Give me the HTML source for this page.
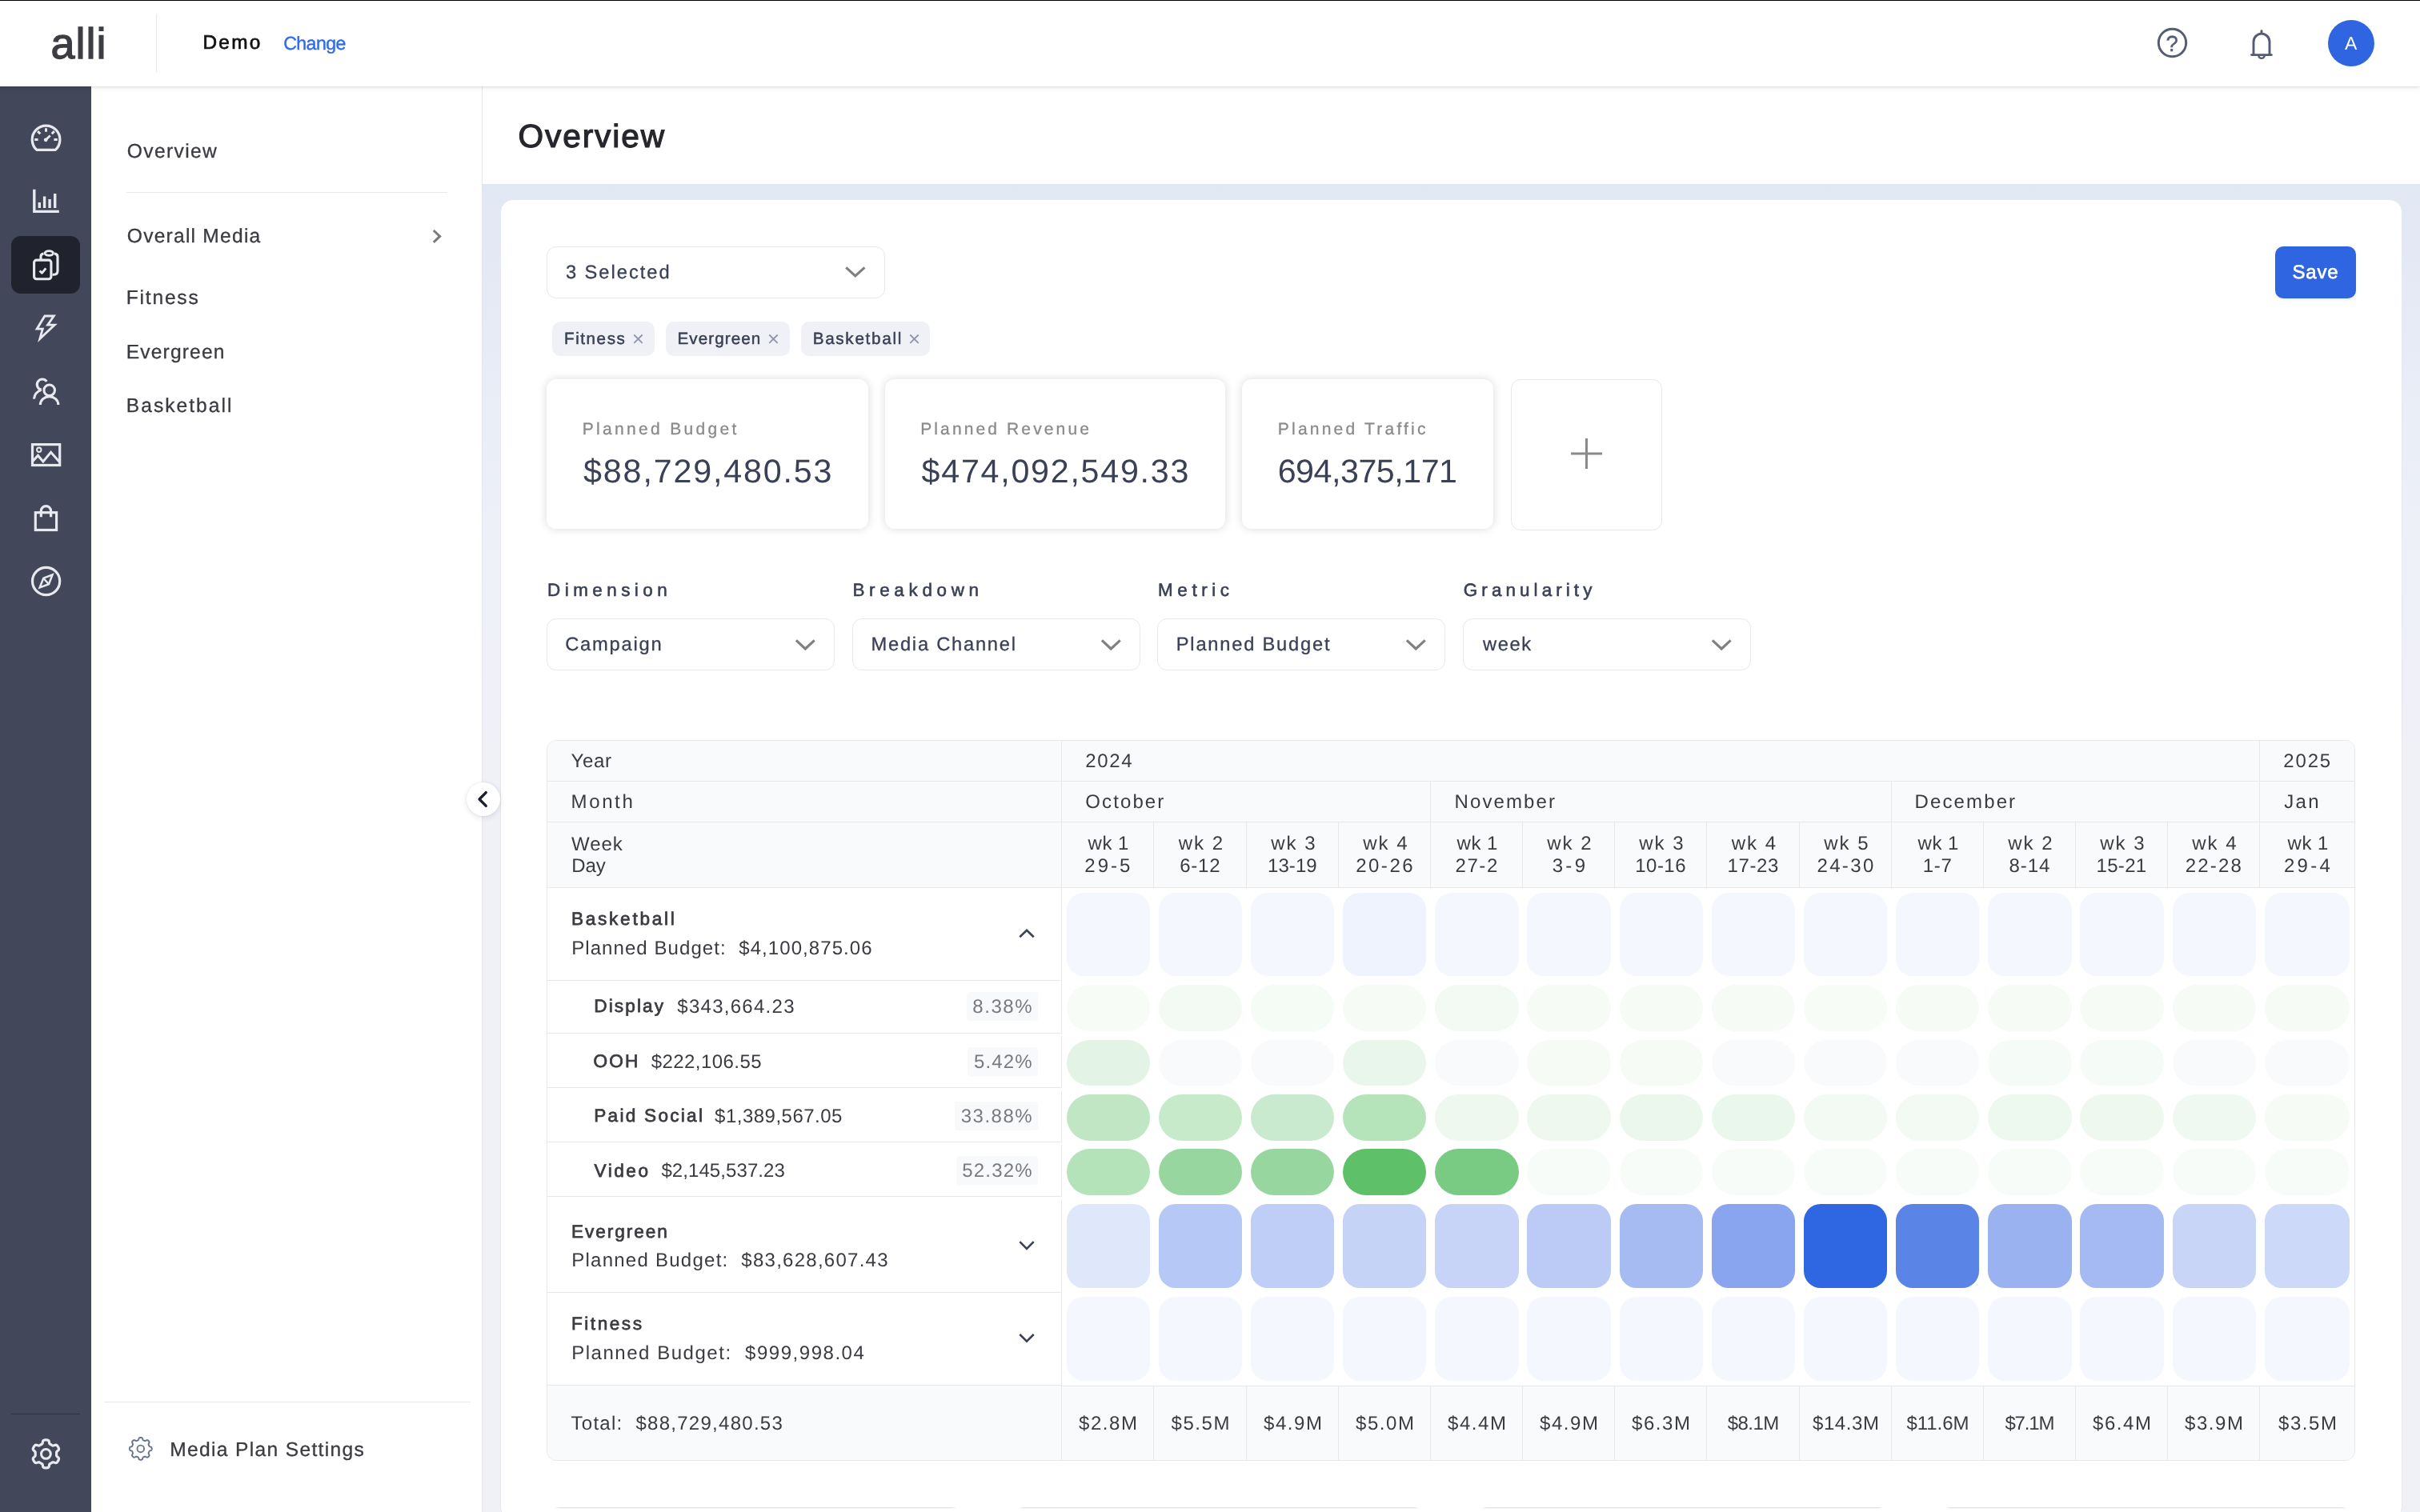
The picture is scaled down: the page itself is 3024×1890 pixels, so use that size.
<!DOCTYPE html>
<html lang="en"><head><meta charset="utf-8"><title>Overview - alli</title>
<style>
html,body{margin:0;padding:0;background:#fff;}
@media (max-width:1600px){html{zoom:0.5;}}
body{width:3024px;height:1890px;overflow:hidden;position:relative;font-family:"Liberation Sans", sans-serif;}
.b{position:absolute;box-sizing:border-box;}
.t{position:absolute;white-space:pre;font-weight:400;text-rendering:geometricPrecision;}
svg.ov{position:absolute;left:0;top:0;width:3024px;height:1890px;}
.tx{position:absolute;left:0;top:0;width:3024px;height:1890px;will-change:transform;}
</style></head><body>
<div class="b" style="left:602.00px;top:230.00px;width:2422.00px;height:1660.00px;background:linear-gradient(180deg,#e1e7f3 0px,#e5eaf5 150px,#eaeef7 300px,#eef0f8 450px,#f0f1f7 700px,#f0f1f7 1660px);"></div>
<div class="b" style="left:624.70px;top:248.70px;width:2376.90px;height:1651.30px;background:#fff;border:1px solid #e6e8ee;border-radius:16px;"></div>
<div class="b" style="left:114.00px;top:108.00px;width:488.50px;height:1782.00px;background:#fff;border-right:1px solid #e7e7eb;"></div>
<div class="b" style="left:603.00px;top:108.00px;width:2421.00px;height:122.00px;background:#fff;"></div>
<div class="b" style="left:0.00px;top:108.00px;width:114.00px;height:1782.00px;background:#42475a;"></div>
<div class="b" style="left:14.00px;top:295.00px;width:86.00px;height:72.00px;background:#20222e;border-radius:12px;"></div>
<div class="b" style="left:14.00px;top:1766.80px;width:86.00px;height:1.40px;background:#2f3242;"></div>
<div class="b" style="left:0.00px;top:0.00px;width:3024.00px;height:108.00px;background:#fff;box-shadow:0 1px 3px rgba(0,0,0,0.10),0 3px 8px rgba(0,0,0,0.05);"></div>
<div class="b" style="left:0.00px;top:0.00px;width:3024.00px;height:1.00px;background:#000;"></div>
<div class="b" style="left:195.00px;top:18.00px;width:1.00px;height:72.00px;background:#e6e7eb;"></div>
<div class="b" style="left:2909.00px;top:25.00px;width:58.00px;height:58.00px;background:#2f65e0;border-radius:50%;"></div>
<div class="b" style="left:158.00px;top:239.50px;width:401.00px;height:1.00px;background:#e9e9ed;"></div>
<div class="b" style="left:130.00px;top:1751.90px;width:458.00px;height:1.00px;background:#e9e9ed;"></div>
<div class="b" style="left:582.50px;top:978.00px;width:42.00px;height:42.00px;background:#fff;border-radius:50%;box-shadow:0 2px 7px rgba(30,35,60,0.12),0 0 2px rgba(30,35,60,0.08);"></div>
<div class="b" style="left:683.00px;top:308.00px;width:423.00px;height:65.00px;background:#fff;border:1px solid #e8e8ea;border-radius:12px;"></div>
<div class="b" style="left:2843.00px;top:308.00px;width:101.00px;height:65.00px;background:#2f65e0;border-radius:10px;box-shadow:0 2px 4px rgba(0,0,0,0.06);"></div>
<div class="b" style="left:689.80px;top:402.00px;width:128.00px;height:42.70px;background:#f0f1f7;border-radius:10px;"></div>
<div class="b" style="left:832.00px;top:402.00px;width:155.00px;height:42.70px;background:#f0f1f7;border-radius:10px;"></div>
<div class="b" style="left:1001.00px;top:402.00px;width:160.80px;height:42.70px;background:#f0f1f7;border-radius:10px;"></div>
<div class="b" style="left:683.00px;top:474.00px;width:402.00px;height:187.00px;background:#fff;border-radius:12px;box-shadow:0 0 12px rgba(0,0,0,0.15);"></div>
<div class="b" style="left:1106.00px;top:474.00px;width:425.30px;height:187.00px;background:#fff;border-radius:12px;box-shadow:0 0 12px rgba(0,0,0,0.15);"></div>
<div class="b" style="left:1551.50px;top:474.00px;width:314.80px;height:187.00px;background:#fff;border-radius:12px;box-shadow:0 0 12px rgba(0,0,0,0.15);"></div>
<div class="b" style="left:1888.00px;top:474.00px;width:189.00px;height:189.00px;background:#fff;border:1px solid #e8e8ea;border-radius:12px;"></div>
<div class="b" style="left:683.00px;top:773.00px;width:360.00px;height:65.00px;background:#fff;border:1px solid #e8e8ea;border-radius:12px;"></div>
<div class="b" style="left:1065.00px;top:773.00px;width:360.00px;height:65.00px;background:#fff;border:1px solid #e8e8ea;border-radius:12px;"></div>
<div class="b" style="left:1446.00px;top:773.00px;width:360.00px;height:65.00px;background:#fff;border:1px solid #e8e8ea;border-radius:12px;"></div>
<div class="b" style="left:1828.00px;top:773.00px;width:360.00px;height:65.00px;background:#fff;border:1px solid #e8e8ea;border-radius:12px;"></div>
<div class="b" style="left:683.00px;top:925.00px;width:2260.00px;height:901.00px;background:#fff;border:1px solid #e8e8ea;border-radius:12px;overflow:hidden;"></div>
<div class="b" style="left:684.00px;top:926.00px;width:2258.00px;height:183.00px;background:#f9fafc;border-radius:11px 11px 0 0;"></div>
<div class="b" style="left:684.00px;top:1733.00px;width:2258.00px;height:92.00px;background:#f9fafc;border-radius:0 0 11px 11px;"></div>
<div class="b" style="left:684.00px;top:1732.00px;width:642.00px;height:2.00px;background:#f9fafc;"></div>
<div class="b" style="left:684.00px;top:976.00px;width:2258.00px;height:1.00px;background:#e8e8ea;"></div>
<div class="b" style="left:684.00px;top:1027.00px;width:2258.00px;height:1.00px;background:#e8e8ea;"></div>
<div class="b" style="left:684.00px;top:1109.00px;width:2258.00px;height:1.00px;background:#e8e8ea;"></div>
<div class="b" style="left:684.00px;top:1225.00px;width:643.00px;height:1.00px;background:#e8e8ea;"></div>
<div class="b" style="left:684.00px;top:1291.00px;width:643.00px;height:1.00px;background:#e8e8ea;"></div>
<div class="b" style="left:684.00px;top:1359.00px;width:643.00px;height:1.00px;background:#e8e8ea;"></div>
<div class="b" style="left:684.00px;top:1427.00px;width:643.00px;height:1.00px;background:#e8e8ea;"></div>
<div class="b" style="left:684.00px;top:1495.00px;width:643.00px;height:1.00px;background:#e8e8ea;"></div>
<div class="b" style="left:684.00px;top:1615.00px;width:643.00px;height:1.00px;background:#e8e8ea;"></div>
<div class="b" style="left:684.00px;top:1731.00px;width:642.00px;height:1.00px;background:#e8e8ea;"></div>
<div class="b" style="left:1327.00px;top:1732.00px;width:1615.00px;height:1.00px;background:#e8e8ea;"></div>
<div class="b" style="left:1326.00px;top:926.00px;width:1.00px;height:899.00px;background:#e8e8ea;"></div>
<div class="b" style="left:1326.00px;top:1292.00px;width:1.00px;height:3.00px;background:#fff;"></div>
<div class="b" style="left:1326.00px;top:1360.00px;width:1.00px;height:3.00px;background:#fff;"></div>
<div class="b" style="left:1326.00px;top:1428.00px;width:1.00px;height:3.00px;background:#fff;"></div>
<div class="b" style="left:1326.00px;top:1496.00px;width:1.00px;height:3.00px;background:#fff;"></div>
<div class="b" style="left:1441.00px;top:1028.00px;width:1.00px;height:81.00px;background:#e8e8ea;"></div>
<div class="b" style="left:1441.00px;top:1733.00px;width:1.00px;height:92.00px;background:#e8e8ea;"></div>
<div class="b" style="left:1557.00px;top:1028.00px;width:1.00px;height:81.00px;background:#e8e8ea;"></div>
<div class="b" style="left:1557.00px;top:1733.00px;width:1.00px;height:92.00px;background:#e8e8ea;"></div>
<div class="b" style="left:1672.00px;top:1028.00px;width:1.00px;height:81.00px;background:#e8e8ea;"></div>
<div class="b" style="left:1672.00px;top:1733.00px;width:1.00px;height:92.00px;background:#e8e8ea;"></div>
<div class="b" style="left:1787.00px;top:1028.00px;width:1.00px;height:81.00px;background:#e8e8ea;"></div>
<div class="b" style="left:1787.00px;top:1733.00px;width:1.00px;height:92.00px;background:#e8e8ea;"></div>
<div class="b" style="left:1902.00px;top:1028.00px;width:1.00px;height:81.00px;background:#e8e8ea;"></div>
<div class="b" style="left:1902.00px;top:1733.00px;width:1.00px;height:92.00px;background:#e8e8ea;"></div>
<div class="b" style="left:2017.00px;top:1028.00px;width:1.00px;height:81.00px;background:#e8e8ea;"></div>
<div class="b" style="left:2017.00px;top:1733.00px;width:1.00px;height:92.00px;background:#e8e8ea;"></div>
<div class="b" style="left:2132.00px;top:1028.00px;width:1.00px;height:81.00px;background:#e8e8ea;"></div>
<div class="b" style="left:2132.00px;top:1733.00px;width:1.00px;height:92.00px;background:#e8e8ea;"></div>
<div class="b" style="left:2248.00px;top:1028.00px;width:1.00px;height:81.00px;background:#e8e8ea;"></div>
<div class="b" style="left:2248.00px;top:1733.00px;width:1.00px;height:92.00px;background:#e8e8ea;"></div>
<div class="b" style="left:2363.00px;top:1028.00px;width:1.00px;height:81.00px;background:#e8e8ea;"></div>
<div class="b" style="left:2363.00px;top:1733.00px;width:1.00px;height:92.00px;background:#e8e8ea;"></div>
<div class="b" style="left:2478.00px;top:1028.00px;width:1.00px;height:81.00px;background:#e8e8ea;"></div>
<div class="b" style="left:2478.00px;top:1733.00px;width:1.00px;height:92.00px;background:#e8e8ea;"></div>
<div class="b" style="left:2593.00px;top:1028.00px;width:1.00px;height:81.00px;background:#e8e8ea;"></div>
<div class="b" style="left:2593.00px;top:1733.00px;width:1.00px;height:92.00px;background:#e8e8ea;"></div>
<div class="b" style="left:2708.00px;top:1028.00px;width:1.00px;height:81.00px;background:#e8e8ea;"></div>
<div class="b" style="left:2708.00px;top:1733.00px;width:1.00px;height:92.00px;background:#e8e8ea;"></div>
<div class="b" style="left:2823.00px;top:1028.00px;width:1.00px;height:81.00px;background:#e8e8ea;"></div>
<div class="b" style="left:2823.00px;top:1733.00px;width:1.00px;height:92.00px;background:#e8e8ea;"></div>
<div class="b" style="left:1787.00px;top:977.00px;width:1.00px;height:50.00px;background:#e8e8ea;"></div>
<div class="b" style="left:2363.00px;top:977.00px;width:1.00px;height:50.00px;background:#e8e8ea;"></div>
<div class="b" style="left:2823.00px;top:977.00px;width:1.00px;height:50.00px;background:#e8e8ea;"></div>
<div class="b" style="left:2823.00px;top:926.00px;width:1.00px;height:50.00px;background:#e8e8ea;"></div>
<div class="b" style="left:1208.30px;top:1240.00px;width:88.70px;height:35.70px;background:#f8f9fb;border-radius:4px;"></div>
<div class="b" style="left:1209.00px;top:1309.40px;width:88.00px;height:35.40px;background:#f8f9fb;border-radius:4px;"></div>
<div class="b" style="left:1193.00px;top:1377.00px;width:104.00px;height:35.80px;background:#f8f9fb;border-radius:4px;"></div>
<div class="b" style="left:1195.00px;top:1445.20px;width:102.00px;height:35.80px;background:#f8f9fb;border-radius:4px;"></div>
<div class="b" style="left:1333.00px;top:1116.00px;width:104.00px;height:104.00px;background:#f4f7fe;border-radius:21px;"></div>
<div class="b" style="left:1333.00px;top:1230.50px;width:104.00px;height:58.30px;background:#f7fcf7;border-radius:30px;"></div>
<div class="b" style="left:1333.00px;top:1299.70px;width:104.00px;height:57.20px;background:#e3f3e5;border-radius:30px;"></div>
<div class="b" style="left:1333.00px;top:1367.70px;width:104.00px;height:57.90px;background:#c0e6c4;border-radius:30px;"></div>
<div class="b" style="left:1333.00px;top:1436.30px;width:104.00px;height:57.50px;background:#b4e3ba;border-radius:30px;"></div>
<div class="b" style="left:1333.00px;top:1505.00px;width:104.00px;height:104.60px;background:#dfe7fb;border-radius:21px;"></div>
<div class="b" style="left:1333.00px;top:1621.00px;width:104.00px;height:104.60px;background:#f4f7fe;border-radius:21px;"></div>
<div class="b" style="left:1448.00px;top:1116.00px;width:104.00px;height:104.00px;background:#f4f7fe;border-radius:21px;"></div>
<div class="b" style="left:1448.00px;top:1230.50px;width:104.00px;height:58.30px;background:#f3faf4;border-radius:30px;"></div>
<div class="b" style="left:1448.00px;top:1299.70px;width:104.00px;height:57.20px;background:#f9fafc;border-radius:30px;"></div>
<div class="b" style="left:1448.00px;top:1367.70px;width:104.00px;height:57.90px;background:#c7eacb;border-radius:30px;"></div>
<div class="b" style="left:1448.00px;top:1436.30px;width:104.00px;height:57.50px;background:#98d69f;border-radius:30px;"></div>
<div class="b" style="left:1448.00px;top:1505.00px;width:104.00px;height:104.60px;background:#b6c8f5;border-radius:21px;"></div>
<div class="b" style="left:1448.00px;top:1621.00px;width:104.00px;height:104.60px;background:#f4f7fe;border-radius:21px;"></div>
<div class="b" style="left:1563.00px;top:1116.00px;width:104.00px;height:104.00px;background:#f4f7fe;border-radius:21px;"></div>
<div class="b" style="left:1563.00px;top:1230.50px;width:104.00px;height:58.30px;background:#f5fbf5;border-radius:30px;"></div>
<div class="b" style="left:1563.00px;top:1299.70px;width:104.00px;height:57.20px;background:#f9fafc;border-radius:30px;"></div>
<div class="b" style="left:1563.00px;top:1367.70px;width:104.00px;height:57.90px;background:#c9eace;border-radius:30px;"></div>
<div class="b" style="left:1563.00px;top:1436.30px;width:104.00px;height:57.50px;background:#98d69f;border-radius:30px;"></div>
<div class="b" style="left:1563.00px;top:1505.00px;width:104.00px;height:104.60px;background:#bfcef6;border-radius:21px;"></div>
<div class="b" style="left:1563.00px;top:1621.00px;width:104.00px;height:104.60px;background:#f4f7fe;border-radius:21px;"></div>
<div class="b" style="left:1678.00px;top:1116.00px;width:104.00px;height:104.00px;background:#eff3fd;border-radius:21px;"></div>
<div class="b" style="left:1678.00px;top:1230.50px;width:104.00px;height:58.30px;background:#f6fbf6;border-radius:30px;"></div>
<div class="b" style="left:1678.00px;top:1299.70px;width:104.00px;height:57.20px;background:#e9f6eb;border-radius:30px;"></div>
<div class="b" style="left:1678.00px;top:1367.70px;width:104.00px;height:57.90px;background:#b5e3ba;border-radius:30px;"></div>
<div class="b" style="left:1678.00px;top:1436.30px;width:104.00px;height:57.50px;background:#5ec069;border-radius:30px;"></div>
<div class="b" style="left:1678.00px;top:1505.00px;width:104.00px;height:104.60px;background:#c5d3f7;border-radius:21px;"></div>
<div class="b" style="left:1678.00px;top:1621.00px;width:104.00px;height:104.60px;background:#f4f7fe;border-radius:21px;"></div>
<div class="b" style="left:1793.00px;top:1116.00px;width:104.50px;height:104.00px;background:#f4f7fe;border-radius:21px;"></div>
<div class="b" style="left:1793.00px;top:1230.50px;width:104.50px;height:58.30px;background:#f3faf4;border-radius:30px;"></div>
<div class="b" style="left:1793.00px;top:1299.70px;width:104.50px;height:57.20px;background:#f9fafc;border-radius:30px;"></div>
<div class="b" style="left:1793.00px;top:1367.70px;width:104.50px;height:57.90px;background:#eef8ef;border-radius:30px;"></div>
<div class="b" style="left:1793.00px;top:1436.30px;width:104.50px;height:57.50px;background:#79cb83;border-radius:30px;"></div>
<div class="b" style="left:1793.00px;top:1505.00px;width:104.50px;height:104.60px;background:#c7d4f7;border-radius:21px;"></div>
<div class="b" style="left:1793.00px;top:1621.00px;width:104.50px;height:104.60px;background:#f4f7fe;border-radius:21px;"></div>
<div class="b" style="left:1908.00px;top:1116.00px;width:105.00px;height:104.00px;background:#f4f7fe;border-radius:21px;"></div>
<div class="b" style="left:1908.00px;top:1230.50px;width:105.00px;height:58.30px;background:#f6fbf6;border-radius:30px;"></div>
<div class="b" style="left:1908.00px;top:1299.70px;width:105.00px;height:57.20px;background:#f6fbf6;border-radius:30px;"></div>
<div class="b" style="left:1908.00px;top:1367.70px;width:105.00px;height:57.90px;background:#eef8ef;border-radius:30px;"></div>
<div class="b" style="left:1908.00px;top:1436.30px;width:105.00px;height:57.50px;background:#f8fcf8;border-radius:30px;"></div>
<div class="b" style="left:1908.00px;top:1505.00px;width:105.00px;height:104.60px;background:#bccbf6;border-radius:21px;"></div>
<div class="b" style="left:1908.00px;top:1621.00px;width:105.00px;height:104.60px;background:#f4f7fe;border-radius:21px;"></div>
<div class="b" style="left:2024.00px;top:1116.00px;width:104.00px;height:104.00px;background:#f4f7fe;border-radius:21px;"></div>
<div class="b" style="left:2024.00px;top:1230.50px;width:104.00px;height:58.30px;background:#f6fbf6;border-radius:30px;"></div>
<div class="b" style="left:2024.00px;top:1299.70px;width:104.00px;height:57.20px;background:#f6fbf6;border-radius:30px;"></div>
<div class="b" style="left:2024.00px;top:1367.70px;width:104.00px;height:57.90px;background:#ebf7ed;border-radius:30px;"></div>
<div class="b" style="left:2024.00px;top:1436.30px;width:104.00px;height:57.50px;background:#f8fcf8;border-radius:30px;"></div>
<div class="b" style="left:2024.00px;top:1505.00px;width:104.00px;height:104.60px;background:#a5bbf2;border-radius:21px;"></div>
<div class="b" style="left:2024.00px;top:1621.00px;width:104.00px;height:104.60px;background:#f4f7fe;border-radius:21px;"></div>
<div class="b" style="left:2139.00px;top:1116.00px;width:104.00px;height:104.00px;background:#f4f7fe;border-radius:21px;"></div>
<div class="b" style="left:2139.00px;top:1230.50px;width:104.00px;height:58.30px;background:#f6fbf6;border-radius:30px;"></div>
<div class="b" style="left:2139.00px;top:1299.70px;width:104.00px;height:57.20px;background:#f9fafc;border-radius:30px;"></div>
<div class="b" style="left:2139.00px;top:1367.70px;width:104.00px;height:57.90px;background:#eaf7ec;border-radius:30px;"></div>
<div class="b" style="left:2139.00px;top:1436.30px;width:104.00px;height:57.50px;background:#f8fcf8;border-radius:30px;"></div>
<div class="b" style="left:2139.00px;top:1505.00px;width:104.00px;height:104.60px;background:#89a5ef;border-radius:21px;"></div>
<div class="b" style="left:2139.00px;top:1621.00px;width:104.00px;height:104.60px;background:#f4f7fe;border-radius:21px;"></div>
<div class="b" style="left:2254.00px;top:1116.00px;width:104.00px;height:104.00px;background:#f4f7fe;border-radius:21px;"></div>
<div class="b" style="left:2254.00px;top:1230.50px;width:104.00px;height:58.30px;background:#f7fcf7;border-radius:30px;"></div>
<div class="b" style="left:2254.00px;top:1299.70px;width:104.00px;height:57.20px;background:#f9fafc;border-radius:30px;"></div>
<div class="b" style="left:2254.00px;top:1367.70px;width:104.00px;height:57.90px;background:#f2faf3;border-radius:30px;"></div>
<div class="b" style="left:2254.00px;top:1436.30px;width:104.00px;height:57.50px;background:#f8fcf8;border-radius:30px;"></div>
<div class="b" style="left:2254.00px;top:1505.00px;width:104.00px;height:104.60px;background:#2f66e1;border-radius:21px;"></div>
<div class="b" style="left:2254.00px;top:1621.00px;width:104.00px;height:104.60px;background:#f4f7fe;border-radius:21px;"></div>
<div class="b" style="left:2369.00px;top:1116.00px;width:104.00px;height:104.00px;background:#f4f7fe;border-radius:21px;"></div>
<div class="b" style="left:2369.00px;top:1230.50px;width:104.00px;height:58.30px;background:#f6fbf6;border-radius:30px;"></div>
<div class="b" style="left:2369.00px;top:1299.70px;width:104.00px;height:57.20px;background:#f9fafc;border-radius:30px;"></div>
<div class="b" style="left:2369.00px;top:1367.70px;width:104.00px;height:57.90px;background:#f2faf3;border-radius:30px;"></div>
<div class="b" style="left:2369.00px;top:1436.30px;width:104.00px;height:57.50px;background:#f8fcf8;border-radius:30px;"></div>
<div class="b" style="left:2369.00px;top:1505.00px;width:104.00px;height:104.60px;background:#5a84e6;border-radius:21px;"></div>
<div class="b" style="left:2369.00px;top:1621.00px;width:104.00px;height:104.60px;background:#f4f7fe;border-radius:21px;"></div>
<div class="b" style="left:2484.00px;top:1116.00px;width:105.00px;height:104.00px;background:#f4f7fe;border-radius:21px;"></div>
<div class="b" style="left:2484.00px;top:1230.50px;width:105.00px;height:58.30px;background:#f6fbf6;border-radius:30px;"></div>
<div class="b" style="left:2484.00px;top:1299.70px;width:105.00px;height:57.20px;background:#f5fbf6;border-radius:30px;"></div>
<div class="b" style="left:2484.00px;top:1367.70px;width:105.00px;height:57.90px;background:#edf8ef;border-radius:30px;"></div>
<div class="b" style="left:2484.00px;top:1436.30px;width:105.00px;height:57.50px;background:#f8fcf8;border-radius:30px;"></div>
<div class="b" style="left:2484.00px;top:1505.00px;width:105.00px;height:104.60px;background:#9ab3f0;border-radius:21px;"></div>
<div class="b" style="left:2484.00px;top:1621.00px;width:105.00px;height:104.60px;background:#f4f7fe;border-radius:21px;"></div>
<div class="b" style="left:2599.00px;top:1116.00px;width:105.00px;height:104.00px;background:#f4f7fe;border-radius:21px;"></div>
<div class="b" style="left:2599.00px;top:1230.50px;width:105.00px;height:58.30px;background:#f6fbf6;border-radius:30px;"></div>
<div class="b" style="left:2599.00px;top:1299.70px;width:105.00px;height:57.20px;background:#f5fbf6;border-radius:30px;"></div>
<div class="b" style="left:2599.00px;top:1367.70px;width:105.00px;height:57.90px;background:#eef8ef;border-radius:30px;"></div>
<div class="b" style="left:2599.00px;top:1436.30px;width:105.00px;height:57.50px;background:#f8fcf8;border-radius:30px;"></div>
<div class="b" style="left:2599.00px;top:1505.00px;width:105.00px;height:104.60px;background:#a5b9f2;border-radius:21px;"></div>
<div class="b" style="left:2599.00px;top:1621.00px;width:105.00px;height:104.60px;background:#f4f7fe;border-radius:21px;"></div>
<div class="b" style="left:2715.00px;top:1116.00px;width:104.00px;height:104.00px;background:#f4f7fe;border-radius:21px;"></div>
<div class="b" style="left:2715.00px;top:1230.50px;width:104.00px;height:58.30px;background:#f6fbf6;border-radius:30px;"></div>
<div class="b" style="left:2715.00px;top:1299.70px;width:104.00px;height:57.20px;background:#f9fafc;border-radius:30px;"></div>
<div class="b" style="left:2715.00px;top:1367.70px;width:104.00px;height:57.90px;background:#f0f9f1;border-radius:30px;"></div>
<div class="b" style="left:2715.00px;top:1436.30px;width:104.00px;height:57.50px;background:#f8fcf8;border-radius:30px;"></div>
<div class="b" style="left:2715.00px;top:1505.00px;width:104.00px;height:104.60px;background:#c8d5f7;border-radius:21px;"></div>
<div class="b" style="left:2715.00px;top:1621.00px;width:104.00px;height:104.60px;background:#f4f7fe;border-radius:21px;"></div>
<div class="b" style="left:2830.00px;top:1116.00px;width:106.00px;height:104.00px;background:#f4f7fe;border-radius:21px;"></div>
<div class="b" style="left:2830.00px;top:1230.50px;width:106.00px;height:58.30px;background:#f6fbf6;border-radius:30px;"></div>
<div class="b" style="left:2830.00px;top:1299.70px;width:106.00px;height:57.20px;background:#f9fafc;border-radius:30px;"></div>
<div class="b" style="left:2830.00px;top:1367.70px;width:106.00px;height:57.90px;background:#f6fbf6;border-radius:30px;"></div>
<div class="b" style="left:2830.00px;top:1436.30px;width:106.00px;height:57.50px;background:#f8fcf8;border-radius:30px;"></div>
<div class="b" style="left:2830.00px;top:1505.00px;width:106.00px;height:104.60px;background:#ccd9f8;border-radius:21px;"></div>
<div class="b" style="left:2830.00px;top:1621.00px;width:106.00px;height:104.60px;background:#f4f7fe;border-radius:21px;"></div>
<div class="b" style="left:693.00px;top:1884.00px;width:502.00px;height:1.00px;background:linear-gradient(90deg,rgba(228,229,231,0),#e4e5e7 6px,#e4e5e7 calc(100% - 6px),rgba(228,229,231,0));"></div>
<div class="b" style="left:693.00px;top:1885.00px;width:502.00px;height:1.00px;background:linear-gradient(90deg,rgba(240,241,242,0),#f3f3f4 6px,#f3f3f4 calc(100% - 6px),rgba(240,241,242,0));"></div>
<div class="b" style="left:1272.50px;top:1884.00px;width:500.50px;height:1.00px;background:linear-gradient(90deg,rgba(228,229,231,0),#e4e5e7 6px,#e4e5e7 calc(100% - 6px),rgba(228,229,231,0));"></div>
<div class="b" style="left:1272.50px;top:1885.00px;width:500.50px;height:1.00px;background:linear-gradient(90deg,rgba(240,241,242,0),#f3f3f4 6px,#f3f3f4 calc(100% - 6px),rgba(240,241,242,0));"></div>
<div class="b" style="left:1852.00px;top:1884.00px;width:501.00px;height:1.00px;background:linear-gradient(90deg,rgba(228,229,231,0),#e4e5e7 6px,#e4e5e7 calc(100% - 6px),rgba(228,229,231,0));"></div>
<div class="b" style="left:1852.00px;top:1885.00px;width:501.00px;height:1.00px;background:linear-gradient(90deg,rgba(240,241,242,0),#f3f3f4 6px,#f3f3f4 calc(100% - 6px),rgba(240,241,242,0));"></div>
<div class="b" style="left:2431.00px;top:1884.00px;width:501.00px;height:1.00px;background:linear-gradient(90deg,rgba(228,229,231,0),#e4e5e7 6px,#e4e5e7 calc(100% - 6px),rgba(228,229,231,0));"></div>
<div class="b" style="left:2431.00px;top:1885.00px;width:501.00px;height:1.00px;background:linear-gradient(90deg,rgba(240,241,242,0),#f3f3f4 6px,#f3f3f4 calc(100% - 6px),rgba(240,241,242,0));"></div>
<svg class="ov" viewBox="0 0 3024 1890">
<g fill="none" stroke="#e8e9ee" stroke-width="3.2"><path d="M45.9 187.4 A17.35 17.35 0 1 1 69.2 187.4 Z" stroke-linejoin="round"/><path d="M43.2 174.5H47.6M67.4 174.5H71.8M57.5 160.3V164.7M47.1 164.1L50.3 167.3M67.9 164.1L64.7 167.3" stroke-width="3"/><path d="M57.3 174.7L62.7 169.5" stroke-width="2.8"/></g><circle cx="57.2" cy="174.8" r="2.4" fill="#e8e9ee"/>
<g fill="none" stroke="#e8e9ee" stroke-width="3.4"><path d="M42.8 236.8V264.4H73.8"/><path d="M49.3 253V260M55.6 245.6V260M62.1 249V260M68.7 242V260"/></g>
<g fill="none" stroke="#e8e9ee" stroke-width="3.1" stroke-linejoin="round"><rect x="42.6" y="325.1" width="21.3" height="23.6" rx="3"/><path d="M51 324V320.5Q51 317.3 54.5 317.1M68 317.1Q72 317.3 72 321V338.5Q72 343.2 67.5 343.2H65.5"/><ellipse cx="61.3" cy="316.5" rx="5.3" ry="2.9" stroke-width="2.8"/><path d="M49.6 338.4L52.4 341.3L57.3 335.3" stroke-width="2.9"/></g>
<path d="M55.9 395H67.3L59.6 406.1H68.3L49.8 423.6L53.3 411.2H46.1Z" fill="none" stroke="#e8e9ee" stroke-width="2.8" stroke-linejoin="miter"/>
<g fill="none" stroke="#e8e9ee" stroke-width="3.1"><circle cx="61.7" cy="487.8" r="6.8"/><path d="M50.4 506A11.2 10.3 0 0 1 72.8 506"/><path d="M58.3 476.8A6.6 6.6 0 1 0 51.75 487.1"/><path d="M42.4 498.6Q43.4 490.4 51.6 487.4"/></g>
<g fill="none" stroke="#e8e9ee"><rect x="40.5" y="555.6" width="34.2" height="25.9" stroke-width="3.2"/><circle cx="48.8" cy="562.3" r="2.7" stroke-width="2"/><path d="M41.2 576.3L47.4 569.4L53.9 577L63.6 565.2L73.9 577" stroke-width="3"/></g>
<g fill="none" stroke="#e8e9ee" stroke-width="3.2"><rect x="44.3" y="640.7" width="26.3" height="21.8"/><path d="M51.3 646.2V638.8A6.15 6.15 0 0 1 63.6 638.8V646.2"/></g>
<g fill="none" stroke="#e8e9ee"><circle cx="57.6" cy="726.5" r="17.1" stroke-width="3.2"/><path d="M65.5 718.5L61 730.2L49.7 734.4L54.3 722.7Z" stroke-width="2.5" stroke-linejoin="miter"/><path d="M54.3 722.7L61 730.2" stroke-width="2.4"/></g>
<path d="M57.4 1799.9L57.9 1799.9L58.3 1799.9L58.8 1800.0L59.2 1800.0L59.7 1800.2L60.1 1800.3L60.5 1800.6L60.9 1801.0L61.2 1801.7L61.4 1802.6L61.5 1803.4L61.7 1804.1L61.9 1804.6L62.2 1804.9L62.5 1805.1L62.8 1805.3L63.1 1805.5L63.4 1805.6L63.7 1805.8L64.0 1806.0L64.3 1806.1L64.6 1806.3L64.9 1806.5L65.2 1806.7L65.5 1806.8L65.8 1807.0L66.2 1807.1L66.7 1807.0L67.4 1806.8L68.3 1806.5L69.1 1806.3L69.8 1806.2L70.4 1806.3L70.8 1806.5L71.2 1806.8L71.5 1807.1L71.8 1807.5L72.1 1807.9L72.3 1808.3L72.6 1808.7L72.8 1809.1L73.0 1809.5L73.2 1809.9L73.3 1810.3L73.5 1810.7L73.5 1811.2L73.5 1811.7L73.3 1812.2L72.9 1812.8L72.2 1813.4L71.6 1814.0L71.1 1814.5L70.8 1814.9L70.6 1815.3L70.6 1815.7L70.6 1816.0L70.6 1816.4L70.6 1816.7L70.6 1817.1L70.6 1817.4L70.6 1817.7L70.6 1818.1L70.6 1818.4L70.6 1818.8L70.6 1819.1L70.6 1819.5L70.8 1819.9L71.1 1820.3L71.6 1820.8L72.2 1821.4L72.9 1822.0L73.3 1822.6L73.5 1823.1L73.5 1823.6L73.5 1824.1L73.3 1824.5L73.2 1824.9L73.0 1825.3L72.8 1825.7L72.6 1826.2L72.3 1826.5L72.1 1826.9L71.8 1827.3L71.5 1827.7L71.2 1828.0L70.8 1828.3L70.4 1828.5L69.8 1828.6L69.1 1828.5L68.3 1828.3L67.4 1828.0L66.7 1827.8L66.2 1827.7L65.8 1827.8L65.5 1828.0L65.2 1828.1L64.9 1828.3L64.6 1828.5L64.3 1828.7L64.0 1828.8L63.7 1829.0L63.4 1829.2L63.1 1829.3L62.8 1829.5L62.5 1829.7L62.2 1829.9L61.9 1830.2L61.7 1830.7L61.5 1831.4L61.4 1832.2L61.2 1833.1L60.9 1833.8L60.5 1834.2L60.1 1834.5L59.7 1834.6L59.2 1834.8L58.8 1834.8L58.3 1834.9L57.9 1834.9L57.4 1834.9L56.9 1834.9L56.5 1834.9L56.0 1834.8L55.6 1834.8L55.1 1834.6L54.7 1834.5L54.3 1834.2L53.9 1833.8L53.6 1833.1L53.4 1832.2L53.3 1831.4L53.1 1830.7L52.9 1830.2L52.6 1829.9L52.3 1829.7L52.0 1829.5L51.7 1829.3L51.4 1829.2L51.1 1829.0L50.8 1828.8L50.5 1828.7L50.2 1828.5L49.9 1828.3L49.6 1828.1L49.3 1828.0L49.0 1827.8L48.6 1827.7L48.1 1827.8L47.4 1828.0L46.5 1828.3L45.7 1828.5L45.0 1828.6L44.4 1828.5L44.0 1828.3L43.6 1828.0L43.3 1827.7L43.0 1827.3L42.7 1826.9L42.5 1826.5L42.2 1826.2L42.0 1825.7L41.8 1825.3L41.6 1824.9L41.5 1824.5L41.3 1824.1L41.3 1823.6L41.3 1823.1L41.5 1822.6L41.9 1822.0L42.6 1821.4L43.2 1820.8L43.7 1820.3L44.0 1819.9L44.2 1819.5L44.2 1819.1L44.2 1818.8L44.2 1818.4L44.2 1818.1L44.2 1817.7L44.2 1817.4L44.2 1817.1L44.2 1816.7L44.2 1816.4L44.2 1816.0L44.2 1815.7L44.2 1815.3L44.0 1814.9L43.7 1814.5L43.2 1814.0L42.6 1813.4L41.9 1812.8L41.5 1812.2L41.3 1811.7L41.3 1811.2L41.3 1810.7L41.5 1810.3L41.6 1809.9L41.8 1809.5L42.0 1809.1L42.2 1808.7L42.5 1808.3L42.7 1807.9L43.0 1807.5L43.3 1807.1L43.6 1806.8L44.0 1806.5L44.4 1806.3L45.0 1806.2L45.7 1806.3L46.5 1806.5L47.4 1806.8L48.1 1807.0L48.6 1807.1L49.0 1807.0L49.3 1806.8L49.6 1806.7L49.9 1806.5L50.2 1806.3L50.5 1806.1L50.8 1806.0L51.1 1805.8L51.4 1805.6L51.7 1805.5L52.0 1805.3L52.3 1805.1L52.6 1804.9L52.9 1804.6L53.1 1804.1L53.3 1803.4L53.4 1802.6L53.6 1801.7L53.9 1801.0L54.3 1800.6L54.7 1800.3L55.1 1800.2L55.6 1800.0L56.0 1800.0L56.5 1799.9L56.9 1799.9Z" fill="none" stroke="#e8e9ee" stroke-width="3.2" stroke-linejoin="round"/><circle cx="57.4" cy="1817.4" r="5.9" fill="none" stroke="#e8e9ee" stroke-width="3"/>
<path d="M175.8 1797.0L176.2 1797.0L176.5 1797.0L176.9 1797.1L177.2 1797.2L177.6 1797.4L177.9 1797.8L178.1 1798.4L178.3 1799.0L178.5 1799.6L178.7 1800.0L179.0 1800.2L179.2 1800.4L179.5 1800.5L179.7 1800.6L180.0 1800.7L180.3 1800.8L180.5 1801.0L180.8 1801.0L181.1 1801.1L181.5 1801.1L181.9 1801.0L182.4 1800.7L183.0 1800.4L183.6 1800.2L184.1 1800.1L184.5 1800.2L184.8 1800.4L185.1 1800.6L185.4 1800.8L185.6 1801.1L185.9 1801.3L186.1 1801.6L186.3 1801.9L186.5 1802.2L186.6 1802.6L186.5 1803.1L186.3 1803.7L186.0 1804.3L185.7 1804.8L185.6 1805.2L185.6 1805.6L185.7 1805.9L185.7 1806.2L185.9 1806.4L186.0 1806.7L186.1 1807.0L186.2 1807.2L186.3 1807.5L186.5 1807.7L186.7 1808.0L187.1 1808.2L187.7 1808.4L188.3 1808.6L188.9 1808.8L189.3 1809.1L189.5 1809.5L189.6 1809.8L189.7 1810.2L189.7 1810.5L189.7 1810.9L189.7 1811.3L189.7 1811.6L189.6 1812.0L189.5 1812.3L189.3 1812.7L188.9 1813.0L188.3 1813.2L187.7 1813.4L187.1 1813.6L186.7 1813.8L186.5 1814.1L186.3 1814.3L186.2 1814.6L186.1 1814.8L186.0 1815.1L185.9 1815.4L185.7 1815.6L185.7 1815.9L185.6 1816.2L185.6 1816.6L185.7 1817.0L186.0 1817.5L186.3 1818.1L186.5 1818.7L186.6 1819.2L186.5 1819.6L186.3 1819.9L186.1 1820.2L185.9 1820.5L185.6 1820.7L185.4 1821.0L185.1 1821.2L184.8 1821.4L184.5 1821.6L184.1 1821.7L183.6 1821.6L183.0 1821.4L182.4 1821.1L181.9 1820.8L181.5 1820.7L181.1 1820.7L180.8 1820.8L180.5 1820.8L180.3 1821.0L180.0 1821.1L179.7 1821.2L179.5 1821.3L179.2 1821.4L179.0 1821.6L178.7 1821.8L178.5 1822.2L178.3 1822.8L178.1 1823.4L177.9 1824.0L177.6 1824.4L177.2 1824.6L176.9 1824.7L176.5 1824.8L176.2 1824.8L175.8 1824.8L175.4 1824.8L175.1 1824.8L174.7 1824.7L174.4 1824.6L174.0 1824.4L173.7 1824.0L173.5 1823.4L173.3 1822.8L173.1 1822.2L172.9 1821.8L172.6 1821.6L172.4 1821.4L172.1 1821.3L171.9 1821.2L171.6 1821.1L171.3 1821.0L171.1 1820.8L170.8 1820.8L170.5 1820.7L170.1 1820.7L169.7 1820.8L169.2 1821.1L168.6 1821.4L168.0 1821.6L167.5 1821.7L167.1 1821.6L166.8 1821.4L166.5 1821.2L166.2 1821.0L166.0 1820.7L165.7 1820.5L165.5 1820.2L165.3 1819.9L165.1 1819.6L165.0 1819.2L165.1 1818.7L165.3 1818.1L165.6 1817.5L165.9 1817.0L166.0 1816.6L166.0 1816.2L165.9 1815.9L165.9 1815.6L165.7 1815.4L165.6 1815.1L165.5 1814.8L165.4 1814.6L165.3 1814.3L165.1 1814.1L164.9 1813.8L164.5 1813.6L163.9 1813.4L163.3 1813.2L162.7 1813.0L162.3 1812.7L162.1 1812.3L162.0 1812.0L161.9 1811.6L161.9 1811.3L161.9 1810.9L161.9 1810.5L161.9 1810.2L162.0 1809.8L162.1 1809.5L162.3 1809.1L162.7 1808.8L163.3 1808.6L163.9 1808.4L164.5 1808.2L164.9 1808.0L165.1 1807.7L165.3 1807.5L165.4 1807.2L165.5 1807.0L165.6 1806.7L165.7 1806.4L165.9 1806.2L165.9 1805.9L166.0 1805.6L166.0 1805.2L165.9 1804.8L165.6 1804.3L165.3 1803.7L165.1 1803.1L165.0 1802.6L165.1 1802.2L165.3 1801.9L165.5 1801.6L165.7 1801.3L166.0 1801.1L166.2 1800.8L166.5 1800.6L166.8 1800.4L167.1 1800.2L167.5 1800.1L168.0 1800.2L168.6 1800.4L169.2 1800.7L169.7 1801.0L170.1 1801.1L170.5 1801.1L170.8 1801.0L171.1 1801.0L171.3 1800.8L171.6 1800.7L171.9 1800.6L172.1 1800.5L172.4 1800.4L172.6 1800.2L172.9 1800.0L173.1 1799.6L173.3 1799.0L173.5 1798.4L173.7 1797.8L174.0 1797.4L174.4 1797.2L174.7 1797.1L175.1 1797.0L175.4 1797.0Z" fill="none" stroke="#66748f" stroke-width="1.9" stroke-linejoin="round"/><circle cx="175.8" cy="1810.9" r="4.3" fill="none" stroke="#66748f" stroke-width="1.9"/>
<circle cx="2714.5" cy="53.5" r="17.2" fill="none" stroke="#555b73" stroke-width="2.9"/>
<g fill="none" stroke="#555b73" stroke-width="2.9" stroke-linecap="round"><path d="M2816 68.6V52.4A10 10.3 0 0 1 2836 52.4V68.6"/><path d="M2813.6 68.6H2838.4"/><path d="M2826 38.6V41"/><path d="M2822.4 70A3.7 3.7 0 0 0 2829.6 70" stroke-width="2.4"/></g>
<path d="M1057.2 334.3L1068.8000000000002 345.0L1080.4 334.3" fill="none" stroke="#808080" stroke-width="3.1" stroke-linecap="butt" stroke-linejoin="miter"/>
<path d="M994.8999999999999 800.3L1006.2999999999998 811.0L1017.6999999999998 800.3" fill="none" stroke="#808080" stroke-width="3.1" stroke-linecap="butt" stroke-linejoin="miter"/>
<path d="M1376.8999999999999 800.3L1388.2999999999997 811.0L1399.6999999999998 800.3" fill="none" stroke="#808080" stroke-width="3.1" stroke-linecap="butt" stroke-linejoin="miter"/>
<path d="M1757.8999999999999 800.3L1769.2999999999997 811.0L1780.6999999999998 800.3" fill="none" stroke="#808080" stroke-width="3.1" stroke-linecap="butt" stroke-linejoin="miter"/>
<path d="M2139.7999999999997 800.3L2151.2 811.0L2162.6 800.3" fill="none" stroke="#808080" stroke-width="3.1" stroke-linecap="butt" stroke-linejoin="miter"/>
<path d="M541.8 288L549.6 295.4L541.8 302.8" fill="none" stroke="#7a7a7a" stroke-width="3"/>
<path d="M607.3 990.6L599 999L607.3 1007.4" fill="none" stroke="#1c1e2c" stroke-width="3.3" stroke-linecap="round" stroke-linejoin="round"/>
<path d="M1274.3 1171.2L1283 1162.7L1291.7 1171.2" fill="none" stroke="#3a4055" stroke-width="2.6"/>
<path d="M1274.3 1552.2L1283.0 1560.8L1291.7 1552.2" fill="none" stroke="#3a4055" stroke-width="2.6" stroke-linecap="butt" stroke-linejoin="miter"/>
<path d="M1274.3 1668L1283.0 1676.6L1291.7 1668" fill="none" stroke="#3a4055" stroke-width="2.6" stroke-linecap="butt" stroke-linejoin="miter"/>
<path d="M792.25 418.5L802.6500000000001 428.9M802.6500000000001 418.5L792.25 428.9" stroke="#8e96aa" stroke-width="1.8" fill="none"/>
<path d="M961.25 418.5L971.6500000000001 428.9M971.6500000000001 418.5L961.25 428.9" stroke="#8e96aa" stroke-width="1.8" fill="none"/>
<path d="M1137.3 418.5L1147.7 428.9M1147.7 418.5L1137.3 428.9" stroke="#8e96aa" stroke-width="1.8" fill="none"/>
<path d="M1963 567H2002M1982.5 548V586" stroke="#8a8a8a" stroke-width="3" fill="none"/>
</svg>
<div class="tx">
<div class="t" style="left:63.40px;top:27.90px;font-size:54px;line-height:54px;color:#3c3d42;letter-spacing:1.058px;-webkit-text-stroke:1.3px #3c3d42;">alli</div>
<div class="t" style="left:253.50px;top:42.30px;font-size:24.4px;line-height:24.4px;color:#111;letter-spacing:2.234px;-webkit-text-stroke:0.7px #111;">Demo</div>
<div class="t" style="left:354.20px;top:42.50px;font-size:23.2px;line-height:23.2px;color:#2f6be6;letter-spacing:-0.606px;-webkit-text-stroke:0.4px #2f6be6;">Change</div>
<div class="t" style="left:2930.00px;top:42.60px;font-size:23px;line-height:23px;color:#fff;">A</div>
<div class="t" style="left:2706.60px;top:41.20px;font-size:27.5px;line-height:27.5px;color:#555b73;-webkit-text-stroke:0.4px #555b73;">?</div>
<div class="t" style="left:158.80px;top:178.20px;font-size:24.6px;line-height:24.6px;color:#3a3b40;letter-spacing:1.352px;-webkit-text-stroke:0.3px #3a3b40;">Overview</div>
<div class="t" style="left:158.80px;top:284.00px;font-size:24.6px;line-height:24.6px;color:#3a3b40;letter-spacing:1.230px;-webkit-text-stroke:0.3px #3a3b40;">Overall Media</div>
<div class="t" style="left:157.80px;top:361.30px;font-size:24.6px;line-height:24.6px;color:#3a3b40;letter-spacing:1.771px;-webkit-text-stroke:0.3px #3a3b40;">Fitness</div>
<div class="t" style="left:157.80px;top:428.70px;font-size:24.6px;line-height:24.6px;color:#3a3b40;letter-spacing:1.138px;-webkit-text-stroke:0.3px #3a3b40;">Evergreen</div>
<div class="t" style="left:157.80px;top:496.10px;font-size:24.6px;line-height:24.6px;color:#3a3b40;letter-spacing:2.010px;-webkit-text-stroke:0.3px #3a3b40;">Basketball</div>
<div class="t" style="left:212.20px;top:1800.60px;font-size:24.6px;line-height:24.6px;color:#3a3b40;letter-spacing:1.331px;-webkit-text-stroke:0.3px #3a3b40;">Media Plan Settings</div>
<div class="t" style="left:647.40px;top:150.00px;font-size:40.6px;line-height:40.6px;color:#26272c;letter-spacing:1.942px;-webkit-text-stroke:1.2px #26272c;">Overview</div>
<div class="t" style="left:706.90px;top:329.90px;font-size:23.7px;line-height:23.7px;color:#3a4055;letter-spacing:1.971px;-webkit-text-stroke:0.3px #3a4055;">3 Selected</div>
<div class="t" style="left:2864.60px;top:329.10px;font-size:24px;line-height:24px;color:#fff;letter-spacing:0.748px;-webkit-text-stroke:0.6px #fff;">Save</div>
<div class="t" style="left:705.00px;top:413.80px;font-size:20.6px;line-height:20.6px;color:#3a4055;letter-spacing:1.570px;-webkit-text-stroke:0.5px #3a4055;">Fitness</div>
<div class="t" style="left:846.50px;top:413.80px;font-size:20.6px;line-height:20.6px;color:#3a4055;letter-spacing:1.080px;-webkit-text-stroke:0.5px #3a4055;">Evergreen</div>
<div class="t" style="left:1015.70px;top:413.80px;font-size:20.6px;line-height:20.6px;color:#3a4055;letter-spacing:1.729px;-webkit-text-stroke:0.5px #3a4055;">Basketball</div>
<div class="t" style="left:727.70px;top:525.90px;font-size:21.0px;line-height:21.0px;color:#8a8a8a;letter-spacing:3.329px;-webkit-text-stroke:0.3px #8a8a8a;">Planned Budget</div>
<div class="t" style="left:729.10px;top:569.10px;font-size:41.2px;line-height:41.2px;color:#3a4055;letter-spacing:1.854px;">$88,729,480.53</div>
<div class="t" style="left:1150.20px;top:525.90px;font-size:21.0px;line-height:21.0px;color:#8a8a8a;letter-spacing:3.122px;-webkit-text-stroke:0.3px #8a8a8a;">Planned Revenue</div>
<div class="t" style="left:1151.60px;top:569.10px;font-size:41.2px;line-height:41.2px;color:#3a4055;letter-spacing:1.750px;">$474,092,549.33</div>
<div class="t" style="left:1596.80px;top:525.90px;font-size:21.0px;line-height:21.0px;color:#8a8a8a;letter-spacing:3.214px;-webkit-text-stroke:0.3px #8a8a8a;">Planned Traffic</div>
<div class="t" style="left:1596.70px;top:569.10px;font-size:41.2px;line-height:41.2px;color:#3a4055;letter-spacing:-0.474px;">694,375,171</div>
<div class="t" style="left:684.10px;top:727.40px;font-size:22.4px;line-height:22.4px;color:#3a4055;letter-spacing:5.472px;-webkit-text-stroke:0.6px #3a4055;">Dimension</div>
<div class="t" style="left:1065.40px;top:727.40px;font-size:22.4px;line-height:22.4px;color:#3a4055;letter-spacing:5.704px;-webkit-text-stroke:0.6px #3a4055;">Breakdown</div>
<div class="t" style="left:1447.10px;top:727.40px;font-size:22.4px;line-height:22.4px;color:#3a4055;letter-spacing:5.589px;-webkit-text-stroke:0.6px #3a4055;">Metric</div>
<div class="t" style="left:1828.80px;top:727.40px;font-size:22.4px;line-height:22.4px;color:#3a4055;letter-spacing:5.109px;-webkit-text-stroke:0.6px #3a4055;">Granularity</div>
<div class="t" style="left:706.20px;top:795.30px;font-size:23.7px;line-height:23.7px;color:#3a4055;letter-spacing:1.801px;-webkit-text-stroke:0.3px #3a4055;">Campaign</div>
<div class="t" style="left:1088.50px;top:795.30px;font-size:23.7px;line-height:23.7px;color:#3a4055;letter-spacing:1.761px;-webkit-text-stroke:0.3px #3a4055;">Media Channel</div>
<div class="t" style="left:1469.80px;top:795.30px;font-size:23.7px;line-height:23.7px;color:#3a4055;letter-spacing:1.776px;-webkit-text-stroke:0.3px #3a4055;">Planned Budget</div>
<div class="t" style="left:1853.10px;top:795.30px;font-size:23.7px;line-height:23.7px;color:#3a4055;letter-spacing:1.582px;-webkit-text-stroke:0.3px #3a4055;">week</div>
<div class="t" style="left:713.50px;top:939.90px;font-size:24.0px;line-height:24.0px;color:#3a3b40;letter-spacing:0.633px;">Year</div>
<div class="t" style="left:1356.30px;top:939.90px;font-size:24.0px;line-height:24.0px;color:#3a3b40;letter-spacing:1.652px;">2024</div>
<div class="t" style="left:2853.30px;top:939.90px;font-size:24.0px;line-height:24.0px;color:#3a3b40;letter-spacing:1.819px;">2025</div>
<div class="t" style="left:713.60px;top:990.80px;font-size:24.0px;line-height:24.0px;color:#3a3b40;letter-spacing:2.611px;">Month</div>
<div class="t" style="left:1356.30px;top:990.80px;font-size:24.0px;line-height:24.0px;color:#3a3b40;letter-spacing:2.104px;">October</div>
<div class="t" style="left:1817.50px;top:990.80px;font-size:24.0px;line-height:24.0px;color:#3a3b40;letter-spacing:2.112px;">November</div>
<div class="t" style="left:2392.60px;top:990.80px;font-size:24.0px;line-height:24.0px;color:#3a3b40;letter-spacing:2.112px;">December</div>
<div class="t" style="left:2854.30px;top:990.80px;font-size:24.0px;line-height:24.0px;color:#3a3b40;letter-spacing:2.326px;">Jan</div>
<div class="t" style="left:714.00px;top:1043.50px;font-size:24.0px;line-height:24.0px;color:#3a3b40;letter-spacing:0.929px;">Week</div>
<div class="t" style="left:714.20px;top:1070.60px;font-size:24.0px;line-height:24.0px;color:#3a3b40;letter-spacing:-0.040px;">Day</div>
<div class="t" style="left:1359.60px;top:1043.30px;font-size:24.0px;line-height:24.0px;color:#3a3b40;letter-spacing:0.467px;">wk 1</div>
<div class="t" style="left:1355.35px;top:1070.50px;font-size:24.0px;line-height:24.0px;color:#3a3b40;letter-spacing:3.004px;">29-5</div>
<div class="t" style="left:1348.10px;top:1768.20px;font-size:24.0px;line-height:24.0px;color:#3a3b40;letter-spacing:1.522px;">$2.8M</div>
<div class="t" style="left:1472.75px;top:1043.30px;font-size:24.0px;line-height:24.0px;color:#3a3b40;letter-spacing:2.033px;">wk 2</div>
<div class="t" style="left:1474.15px;top:1070.50px;font-size:24.0px;line-height:24.0px;color:#3a3b40;letter-spacing:0.804px;">6-12</div>
<div class="t" style="left:1463.60px;top:1768.20px;font-size:24.0px;line-height:24.0px;color:#3a3b40;letter-spacing:1.522px;">$5.5M</div>
<div class="t" style="left:1588.25px;top:1043.30px;font-size:24.0px;line-height:24.0px;color:#3a3b40;letter-spacing:2.033px;">wk 3</div>
<div class="t" style="left:1584.05px;top:1070.50px;font-size:24.0px;line-height:24.0px;color:#3a3b40;letter-spacing:0.066px;">13-19</div>
<div class="t" style="left:1579.10px;top:1768.20px;font-size:24.0px;line-height:24.0px;color:#3a3b40;letter-spacing:1.522px;">$4.9M</div>
<div class="t" style="left:1703.25px;top:1043.30px;font-size:24.0px;line-height:24.0px;color:#3a3b40;letter-spacing:2.033px;">wk 4</div>
<div class="t" style="left:1694.15px;top:1070.50px;font-size:24.0px;line-height:24.0px;color:#3a3b40;letter-spacing:2.516px;">20-26</div>
<div class="t" style="left:1694.10px;top:1768.20px;font-size:24.0px;line-height:24.0px;color:#3a3b40;letter-spacing:1.522px;">$5.0M</div>
<div class="t" style="left:1820.60px;top:1043.30px;font-size:24.0px;line-height:24.0px;color:#3a3b40;letter-spacing:0.467px;">wk 1</div>
<div class="t" style="left:1818.40px;top:1070.50px;font-size:24.0px;line-height:24.0px;color:#3a3b40;letter-spacing:1.638px;">27-2</div>
<div class="t" style="left:1809.10px;top:1768.20px;font-size:24.0px;line-height:24.0px;color:#3a3b40;letter-spacing:1.522px;">$4.4M</div>
<div class="t" style="left:1933.25px;top:1043.30px;font-size:24.0px;line-height:24.0px;color:#3a3b40;letter-spacing:2.033px;">wk 2</div>
<div class="t" style="left:1939.70px;top:1070.50px;font-size:24.0px;line-height:24.0px;color:#3a3b40;letter-spacing:3.330px;">3-9</div>
<div class="t" style="left:1924.10px;top:1768.20px;font-size:24.0px;line-height:24.0px;color:#3a3b40;letter-spacing:1.522px;">$4.9M</div>
<div class="t" style="left:2048.25px;top:1043.30px;font-size:24.0px;line-height:24.0px;color:#3a3b40;letter-spacing:2.033px;">wk 3</div>
<div class="t" style="left:2043.25px;top:1070.50px;font-size:24.0px;line-height:24.0px;color:#3a3b40;letter-spacing:0.466px;">10-16</div>
<div class="t" style="left:2039.10px;top:1768.20px;font-size:24.0px;line-height:24.0px;color:#3a3b40;letter-spacing:1.522px;">$6.3M</div>
<div class="t" style="left:2163.75px;top:1043.30px;font-size:24.0px;line-height:24.0px;color:#3a3b40;letter-spacing:2.033px;">wk 4</div>
<div class="t" style="left:2158.50px;top:1070.50px;font-size:24.0px;line-height:24.0px;color:#3a3b40;letter-spacing:0.591px;">17-23</div>
<div class="t" style="left:2158.70px;top:1768.20px;font-size:24.0px;line-height:24.0px;color:#3a3b40;letter-spacing:-0.528px;">$8.1M</div>
<div class="t" style="left:2279.25px;top:1043.30px;font-size:24.0px;line-height:24.0px;color:#3a3b40;letter-spacing:2.033px;">wk 5</div>
<div class="t" style="left:2270.40px;top:1070.50px;font-size:24.0px;line-height:24.0px;color:#3a3b40;letter-spacing:2.391px;">24-30</div>
<div class="t" style="left:2265.00px;top:1768.20px;font-size:24.0px;line-height:24.0px;color:#3a3b40;letter-spacing:0.588px;">$14.3M</div>
<div class="t" style="left:2396.60px;top:1043.30px;font-size:24.0px;line-height:24.0px;color:#3a3b40;letter-spacing:0.467px;">wk 1</div>
<div class="t" style="left:2402.85px;top:1070.50px;font-size:24.0px;line-height:24.0px;color:#3a3b40;letter-spacing:0.680px;">1-7</div>
<div class="t" style="left:2382.60px;top:1768.20px;font-size:24.0px;line-height:24.0px;color:#3a3b40;letter-spacing:-0.095px;">$11.6M</div>
<div class="t" style="left:2509.25px;top:1043.30px;font-size:24.0px;line-height:24.0px;color:#3a3b40;letter-spacing:2.033px;">wk 2</div>
<div class="t" style="left:2510.40px;top:1070.50px;font-size:24.0px;line-height:24.0px;color:#3a3b40;letter-spacing:0.971px;">8-14</div>
<div class="t" style="left:2505.40px;top:1768.20px;font-size:24.0px;line-height:24.0px;color:#3a3b40;letter-spacing:-1.128px;">$7.1M</div>
<div class="t" style="left:2624.25px;top:1043.30px;font-size:24.0px;line-height:24.0px;color:#3a3b40;letter-spacing:2.033px;">wk 3</div>
<div class="t" style="left:2619.60px;top:1070.50px;font-size:24.0px;line-height:24.0px;color:#3a3b40;letter-spacing:0.291px;">15-21</div>
<div class="t" style="left:2615.10px;top:1768.20px;font-size:24.0px;line-height:24.0px;color:#3a3b40;letter-spacing:1.522px;">$6.4M</div>
<div class="t" style="left:2739.25px;top:1043.30px;font-size:24.0px;line-height:24.0px;color:#3a3b40;letter-spacing:2.033px;">wk 4</div>
<div class="t" style="left:2730.80px;top:1070.50px;font-size:24.0px;line-height:24.0px;color:#3a3b40;letter-spacing:2.191px;">22-28</div>
<div class="t" style="left:2730.10px;top:1768.20px;font-size:24.0px;line-height:24.0px;color:#3a3b40;letter-spacing:1.522px;">$3.9M</div>
<div class="t" style="left:2858.60px;top:1043.30px;font-size:24.0px;line-height:24.0px;color:#3a3b40;letter-spacing:0.467px;">wk 1</div>
<div class="t" style="left:2853.95px;top:1070.50px;font-size:24.0px;line-height:24.0px;color:#3a3b40;letter-spacing:3.271px;">29-4</div>
<div class="t" style="left:2847.10px;top:1768.20px;font-size:24.0px;line-height:24.0px;color:#3a3b40;letter-spacing:1.522px;">$3.5M</div>
<div class="t" style="left:713.90px;top:1138.30px;font-size:22.6px;line-height:22.6px;color:#3a3b40;letter-spacing:2.742px;-webkit-text-stroke:0.75px #3a3b40;">Basketball</div>
<div class="t" style="left:714.20px;top:1173.80px;font-size:24.0px;line-height:24.0px;color:#3a3b40;letter-spacing:1.074px;">Planned Budget:  $4,100,875.06</div>
<div class="t" style="left:713.90px;top:1528.60px;font-size:22.6px;line-height:22.6px;color:#3a3b40;letter-spacing:1.953px;-webkit-text-stroke:0.75px #3a3b40;">Evergreen</div>
<div class="t" style="left:714.20px;top:1564.10px;font-size:24.0px;line-height:24.0px;color:#3a3b40;letter-spacing:1.257px;">Planned Budget:  $83,628,607.43</div>
<div class="t" style="left:713.90px;top:1643.80px;font-size:22.6px;line-height:22.6px;color:#3a3b40;letter-spacing:2.546px;-webkit-text-stroke:0.75px #3a3b40;">Fitness</div>
<div class="t" style="left:714.20px;top:1679.90px;font-size:24.0px;line-height:24.0px;color:#3a3b40;letter-spacing:1.532px;">Planned Budget:  $999,998.04</div>
<div class="t" style="left:713.50px;top:1768.20px;font-size:24.0px;line-height:24.0px;color:#3a3b40;letter-spacing:1.277px;">Total:  $88,729,480.53</div>
<div class="t" style="left:742.30px;top:1247.30px;font-size:22.6px;line-height:22.6px;color:#3a3b40;letter-spacing:2.119px;-webkit-text-stroke:0.75px #3a3b40;">Display</div>
<div class="t" style="left:846.30px;top:1246.70px;font-size:24.0px;line-height:24.0px;color:#3a3b40;letter-spacing:1.278px;">$343,664.23</div>
<div class="t" style="left:1215.20px;top:1246.70px;font-size:24.0px;line-height:24.0px;color:#777a80;letter-spacing:1.597px;">8.38%</div>
<div class="t" style="left:741.60px;top:1316.40px;font-size:22.6px;line-height:22.6px;color:#3a3b40;letter-spacing:2.076px;-webkit-text-stroke:0.75px #3a3b40;">OOH</div>
<div class="t" style="left:813.70px;top:1315.80px;font-size:24.0px;line-height:24.0px;color:#3a3b40;letter-spacing:0.438px;">$222,106.55</div>
<div class="t" style="left:1216.90px;top:1315.80px;font-size:24.0px;line-height:24.0px;color:#777a80;letter-spacing:1.172px;">5.42%</div>
<div class="t" style="left:742.30px;top:1384.40px;font-size:22.6px;line-height:22.6px;color:#3a3b40;letter-spacing:2.258px;-webkit-text-stroke:0.75px #3a3b40;">Paid Social</div>
<div class="t" style="left:893.10px;top:1383.80px;font-size:24.0px;line-height:24.0px;color:#3a3b40;letter-spacing:0.489px;">$1,389,567.05</div>
<div class="t" style="left:1200.70px;top:1383.80px;font-size:24.0px;line-height:24.0px;color:#777a80;letter-spacing:1.508px;">33.88%</div>
<div class="t" style="left:742.60px;top:1452.60px;font-size:22.6px;line-height:22.6px;color:#3a3b40;letter-spacing:2.497px;-webkit-text-stroke:0.75px #3a3b40;">Video</div>
<div class="t" style="left:826.40px;top:1452.00px;font-size:24.0px;line-height:24.0px;color:#3a3b40;letter-spacing:0.081px;">$2,145,537.23</div>
<div class="t" style="left:1202.30px;top:1452.00px;font-size:24.0px;line-height:24.0px;color:#777a80;letter-spacing:1.188px;">52.32%</div>
</div>
</body></html>
